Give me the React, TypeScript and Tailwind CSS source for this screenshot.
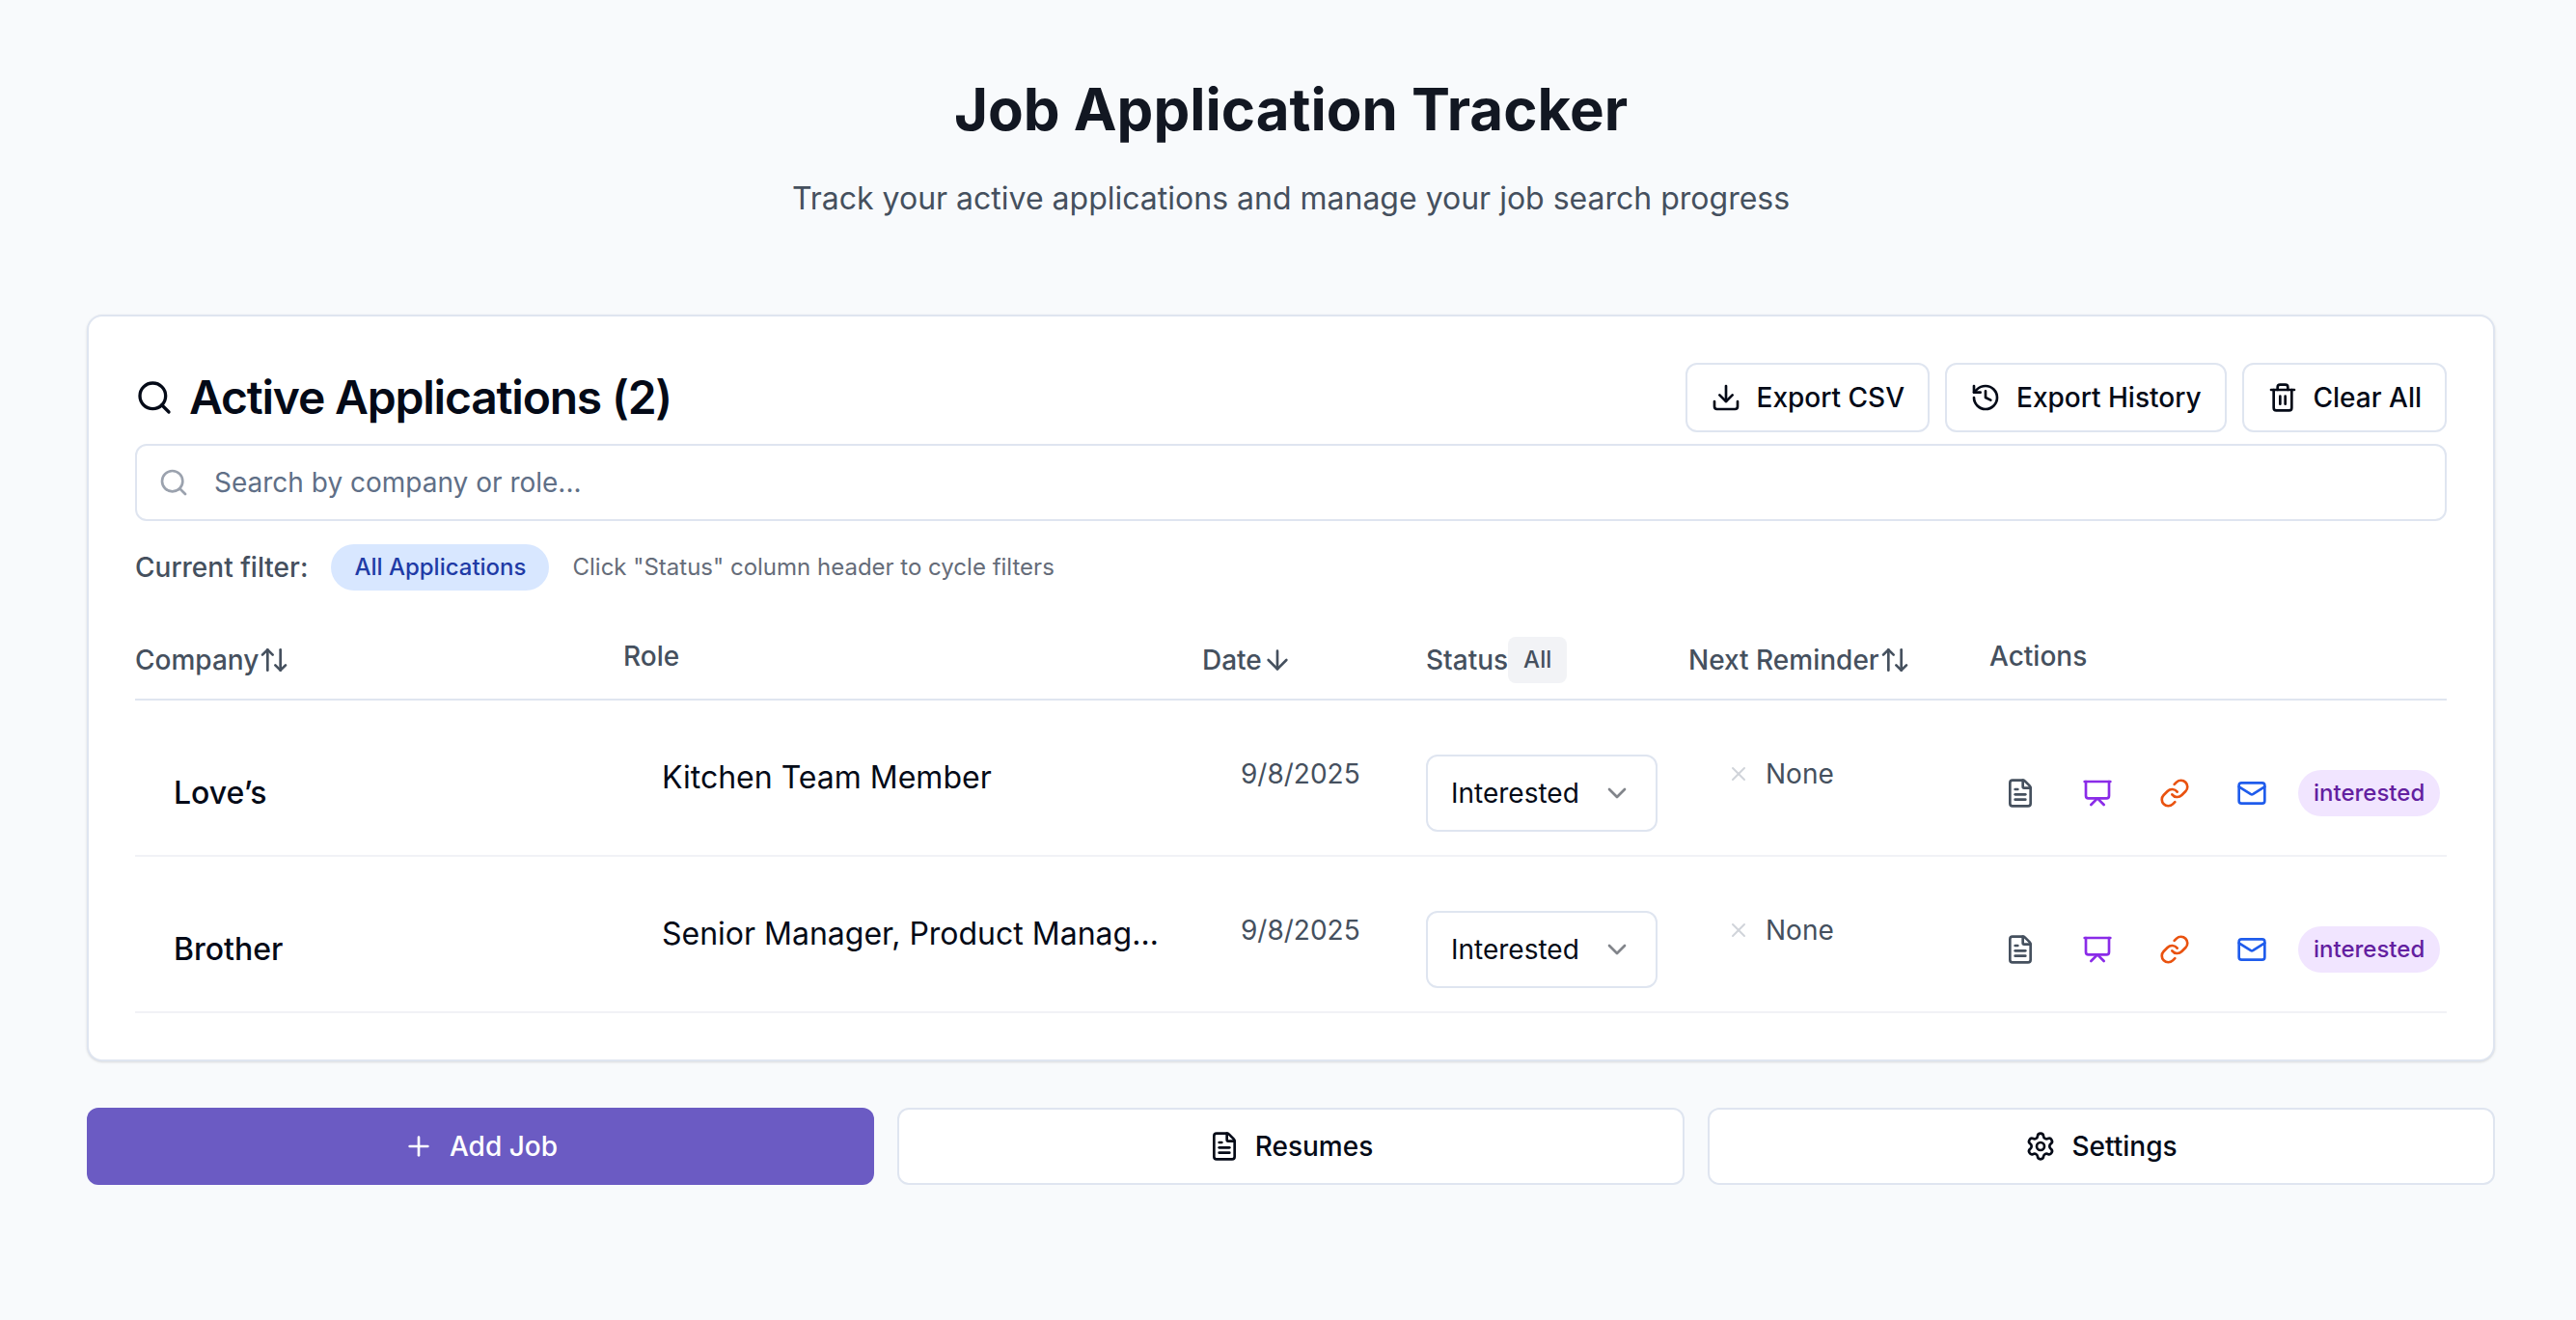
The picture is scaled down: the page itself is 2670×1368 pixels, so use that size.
import type { ReactNode } from "react";
import {
  ArrowDown,
  ArrowUpDown,
  ChevronDown,
  Download,
  FileText,
  History,
  Link,
  Mail,
  Plus,
  Presentation,
  Search,
  Settings,
  Trash2,
  X,
} from "lucide-react";

const jobs = [
  { company: "Love’s", role: "Kitchen Team Member", date: "9/8/2025" },
  { company: "Brother", role: "Senior Manager, Product Manag…", date: "9/8/2025" },
];

function OutlineButton({ icon, children, className = "" }: { icon: ReactNode; children: ReactNode; className?: string }) {
  return (
    <button type="button" className={`flex items-center justify-center gap-4 rounded-xl border-2 border-[#dfe5f0] bg-white font-medium text-[#040a17] ${className}`}>
      {icon}
      {children}
    </button>
  );
}

function IconButton({ label, className, children }: { label: string; className: string; children: ReactNode }) {
  return (
    <button type="button" aria-label={label} className={`flex size-16 shrink-0 items-center justify-center ${className}`}>
      {children}
    </button>
  );
}

export default function App() {
  return (
    <div className="min-h-screen bg-[#f8fafc] pt-20 pr-[84px] pb-20 pl-[90px] font-['Inter',sans-serif] text-[28px] leading-10 text-[#040a17]">
      <header className="mb-[92px] text-center">
        <h1 className="text-[60px] leading-[66px] font-bold text-[#121722]">Job Application Tracker</h1>
        <p className="mt-8 text-[32px] leading-[56px] text-[#45505e]">
          Track your active applications and manage your job search progress
        </p>
      </header>

      <main>
        <section className="rounded-2xl border-2 border-[#dfe5f0] bg-white p-12 shadow-sm">
          <div className="flex items-center justify-between">
            <h2 className="flex items-center gap-4 text-[48px] leading-[48px] font-semibold tracking-tight">
              <Search className="size-10" />
              Active Applications (2)
            </h2>
            <div className="flex gap-4">
              <OutlineButton className="h-[72px] px-6" icon={<Download className="size-8" />}>Export CSV</OutlineButton>
              <OutlineButton className="h-[72px] px-6" icon={<History className="size-8" />}>Export History</OutlineButton>
              <OutlineButton className="h-[72px] px-6" icon={<Trash2 className="size-8" />}>Clear All</OutlineButton>
            </div>
          </div>

          <label className="mt-3 flex h-20 items-center gap-[26px] rounded-xl border-2 border-[#dfe5f0] px-[22px]">
            <Search className="size-8 text-[#9ba2ae]" />
            <input
              type="text"
              aria-label="Search applications"
              placeholder="Search by company or role..."
              className="min-w-0 flex-1 bg-transparent outline-none placeholder:text-[#5f6f87]"
            />
          </label>

          <div className="mt-6 flex items-center gap-6">
            <span className="font-medium text-[#45505e]">Current filter:</span>
            <span className="rounded-full bg-[#d8e7ff] px-6 py-2 text-[24px] leading-8 font-medium text-[#1f3ba6]">All Applications</span>
            <span className="text-[24px] leading-8 text-[#656c79]">Click "Status" column header to cycle filters</span>
          </div>

          <table className="mt-6 w-full table-fixed border-separate border-spacing-0 text-left">
            <colgroup>
              <col className="w-[506px]" />
              <col />
              <col className="w-[232px]" />
              <col className="w-[272px]" />
              <col className="w-[312px]" />
              <col className="w-[474px]" />
            </colgroup>
            <thead className="text-[#45505e]">
              <tr className="align-top *:border-b-2 *:border-[#dfe5f0] *:pt-6 *:pb-4 *:font-medium">
                <th>
                  <button type="button" className="flex h-12 items-center">Company<ArrowUpDown className="size-8" /></button>
                </th>
                <th>Role</th>
                <th>
                  <button type="button" className="flex h-12 items-center">Date<ArrowDown className="size-8" /></button>
                </th>
                <th>
                  <button type="button" className="flex h-12 items-center">
                    Status
                    <span className="rounded-lg bg-[#f2f3f6] px-4 py-2 text-[24px] leading-8">All</span>
                  </button>
                </th>
                <th>
                  <button type="button" className="flex h-12 items-center">Next Reminder<ArrowUpDown className="size-8" /></button>
                </th>
                <th>Actions</th>
              </tr>
            </thead>
            <tbody>
              {jobs.map((job) => (
                <tr key={job.company} className="align-top *:border-b-2 *:border-[#f1f2f6] *:pt-14 *:pb-6">
                  <td className="pl-10 text-[32px] leading-[80px] font-medium">{job.company}</td>
                  <td className="pr-6 pl-10 text-[32px] leading-[48px]">
                    <div className="truncate">{job.role}</div>
                  </td>
                  <td className="pl-10 text-[#45505e]">{job.date}</td>
                  <td>
                    <div className="relative w-60">
                      <select
                        aria-label={`Status of ${job.company}`}
                        className="block h-20 w-full appearance-none rounded-xl border-2 border-[#dfe5f0] bg-white px-6"
                      >
                        <option>Interested</option>
                        <option>Applied</option>
                      </select>
                      <ChevronDown className="pointer-events-none absolute top-6 right-[26px] size-8 text-[#82858b]" />
                    </div>
                  </td>
                  <td className="pl-10">
                    <button type="button" className="flex items-center gap-4 text-[#45505e]">
                      <X className="size-6 text-[#d0d4da]" />
                      None
                    </button>
                  </td>
                  <td>
                    <div className="flex h-20 items-center gap-4">
                      <IconButton label="Notes" className="text-[#45505e]"><FileText className="size-8" /></IconButton>
                      <IconButton label="Interview" className="text-[#8a2be8]"><Presentation className="size-8" /></IconButton>
                      <IconButton label="Job link" className="text-[#e9520f]"><Link className="size-8" /></IconButton>
                      <IconButton label="Email" className="text-[#1f5cec]"><Mail className="size-8" /></IconButton>
                      <span className="rounded-full bg-[#f1e5ff] px-4 py-2 text-[24px] leading-8 font-medium text-[#6320a0]">interested</span>
                    </div>
                  </td>
                </tr>
              ))}
            </tbody>
          </table>
        </section>

        <nav className="mt-12 grid grid-cols-3 gap-6">
          <button type="button" className="flex h-20 items-center justify-center gap-4 rounded-xl bg-[#6b5bc3] font-medium text-white">
            <Plus className="size-8" />
            Add Job
          </button>
          <OutlineButton className="h-20" icon={<FileText className="size-8" />}>Resumes</OutlineButton>
          <OutlineButton className="h-20" icon={<Settings className="size-8" />}>Settings</OutlineButton>
        </nav>
      </main>
    </div>
  );
}
